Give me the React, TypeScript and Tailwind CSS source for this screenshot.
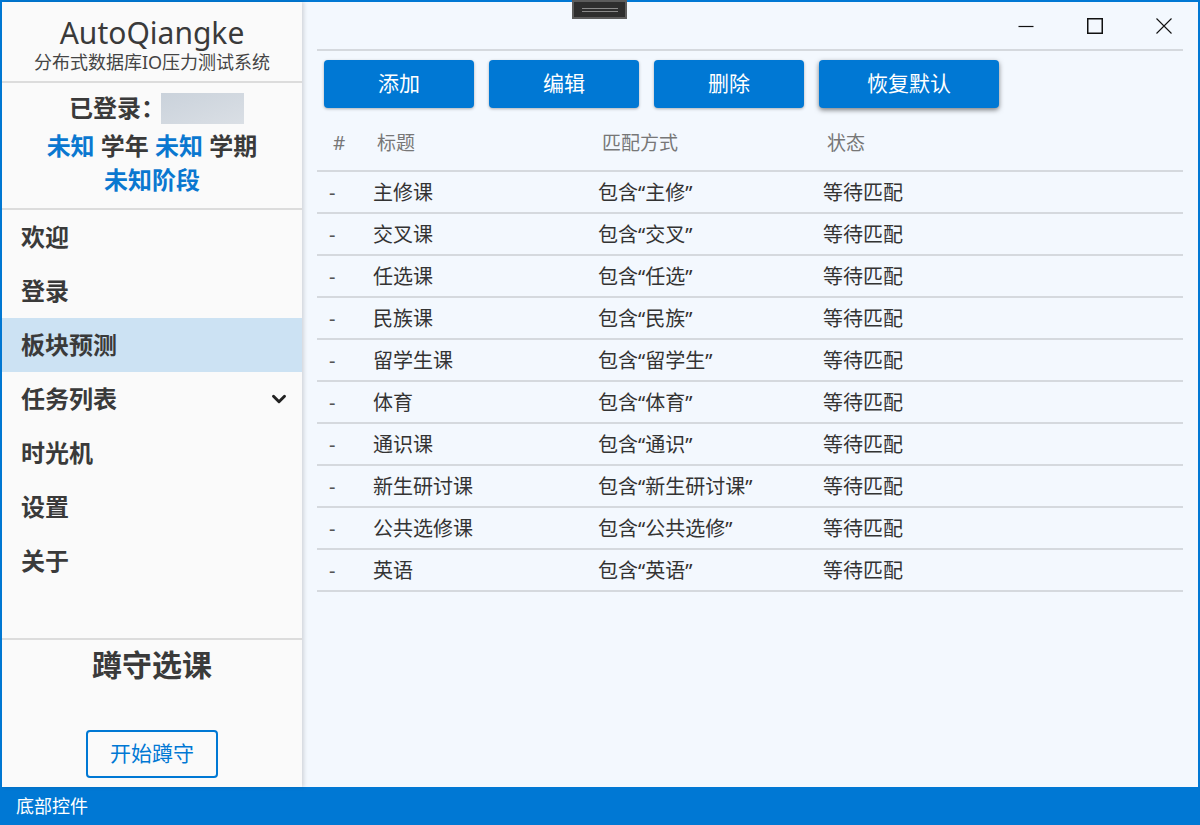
import { ChevronDown } from "lucide-react";

const rows = [
  { title: "主修课", match: "包含“主修”" },
  { title: "交叉课", match: "包含“交叉”" },
  { title: "任选课", match: "包含“任选”" },
  { title: "民族课", match: "包含“民族”" },
  { title: "留学生课", match: "包含“留学生”" },
  { title: "体育", match: "包含“体育”" },
  { title: "通识课", match: "包含“通识”" },
  { title: "新生研讨课", match: "包含“新生研讨课”" },
  { title: "公共选修课", match: "包含“公共选修”" },
  { title: "英语", match: "包含“英语”" },
];

const navItems = ["欢迎", "登录", "板块预测", "任务列表", "时光机", "设置", "关于"];

function Sidebar() {
  return (
    <aside className="relative z-10 flex w-[300px] shrink-0 flex-col bg-[#fafafa] text-[#333] shadow-[2px_0_4px_rgba(0,0,0,0.14)]">
      {/* Title */}
      <div className="flex flex-col items-center pb-[7px] pt-[14px]">
        <div className="h-[34px] text-[30px] leading-[34px] text-[#3a3a3a]">AutoQiangke</div>
        <div className="h-[24px] text-[18px] leading-[24px] text-[#444]">分布式数据库IO压力测试系统</div>
      </div>
      <div className="h-[2px] bg-[#dcdcdc]" />

      {/* Login info */}
      <div className="flex flex-col items-center pb-[12px] font-bold">
        <div className="mt-[9px] flex h-[32px] items-center pl-[9px]">
          <span className="text-[24px] leading-[32px] text-[#3a3a3a]">已登录：</span>
          <span className="ml-[-4px] h-[31px] w-[83px] bg-gradient-to-br from-[#cad2db] to-[#dadfe5]" />
        </div>
        <div className="mt-[5px] h-[34px] text-[24px] leading-[34px] text-[#3a3a3a]">
          <span className="text-[#0a78d0]">未知</span> 学年 <span className="text-[#0a78d0]">未知</span> 学期
        </div>
        <div className="h-[33px] text-[24px] leading-[33px] text-[#0a78d0]">未知阶段</div>
      </div>
      <div className="h-[2px] bg-[#dcdcdc]" />

      {/* Navigation */}
      <nav className="flex flex-col">
        {navItems.map((item) => (
          <div
            key={item}
            className={`flex h-[54px] items-center justify-between pl-[19px] pr-[12px] text-[24px] font-bold text-[#3a3a3a] ${
              item === "板块预测" ? "bg-[#cce2f3]" : ""
            }`}
          >
            <span>{item}</span>
            {item === "任务列表" && <ChevronDown size={22} strokeWidth={3.2} className="text-[#222]" />}
          </div>
        ))}
      </nav>

      <div className="flex-1" />
      <div className="h-[2px] bg-[#dcdcdc]" />

      {/* Watch section */}
      <div className="flex flex-col items-center pb-[9px] pt-[7px]">
        <div className="h-[36px] text-[30px] font-bold leading-[36px] text-[#3a3a3a]">蹲守选课</div>
        <button className="mt-[47px] flex h-[48px] w-[132px] items-center justify-center rounded-[4px] border-2 border-[#0078d4] text-[21px] text-[#0078d4]">
          开始蹲守
        </button>
      </div>
    </aside>
  );
}

function WindowControls() {
  return (
    <div className="flex h-[47px] justify-end">
      <div className="flex w-[69px] items-center justify-center">
        <svg width="16" height="16" viewBox="0 0 16 16">
          <line x1="0.5" y1="8.5" x2="15.5" y2="8.5" stroke="#111" strokeWidth="1.2" />
        </svg>
      </div>
      <div className="flex w-[69px] items-center justify-center">
        <svg width="16" height="16" viewBox="0 0 16 16">
          <rect x="0.75" y="0.75" width="14.5" height="14.5" fill="none" stroke="#111" strokeWidth="1.5" />
        </svg>
      </div>
      <div className="flex w-[69px] items-center justify-center">
        <svg width="16" height="16" viewBox="0 0 16 16">
          <path d="M0.5 0.5 L15.5 15.5 M15.5 0.5 L0.5 15.5" stroke="#111" strokeWidth="1.1" />
        </svg>
      </div>
    </div>
  );
}

function Main() {
  const buttons = ["添加", "编辑", "删除", "恢复默认"];
  return (
    <main className="flex flex-1 flex-col bg-[#f3f8fe]">
      <WindowControls />
      <div className="px-[15px]">
        <div className="h-[2px] bg-[#d5d9de]" />

        {/* Toolbar */}
        <div className="mt-[9px] flex gap-[15px] pl-[7px]">
          {buttons.map((b) => (
            <button
              key={b}
              className={`flex h-[48px] items-center justify-center rounded-[4px] bg-[#0078d4] text-[21px] text-white ${
                b === "恢复默认"
                  ? "w-[180px] shadow-[0_2px_5px_rgba(0,0,0,0.5)]"
                  : "w-[150px] shadow-[0_1px_3px_rgba(0,0,0,0.3)]"
              }`}
            >
              {b}
            </button>
          ))}
        </div>

        {/* Table */}
        <div className="mt-[20px] grid h-[44px] grid-cols-[44px_225px_225px_1fr] border-b-2 border-[#d5d9de] pb-[14px] pl-[16px] text-[19px] leading-[30px] text-[#777]">
          <span>#</span>
          <span>标题</span>
          <span>匹配方式</span>
          <span>状态</span>
        </div>
        {rows.map((r) => (
          <div
            key={r.title}
            className="grid h-[42px] grid-cols-[44px_225px_225px_1fr] items-center border-b-2 border-[#d5d9de] pl-[12px] pt-[2px] text-[20px] text-[#333]"
          >
            <span className="text-[#555]">-</span>
            <span>{r.title}</span>
            <span>{r.match}</span>
            <span>等待匹配</span>
          </div>
        ))}
      </div>
    </main>
  );
}

export default function App() {
  return (
    <div
      className="relative flex h-screen w-screen flex-col overflow-hidden"
      style={{ fontFamily: '"Noto Sans", "Noto Sans CJK SC", sans-serif' }}
    >
      <div className="flex min-h-0 flex-1 border-x-2 border-t-2 border-[#0078d4]">
        <Sidebar />
        <Main />
      </div>
      <div className="flex h-[38px] shrink-0 items-center bg-[#0078d4] pl-[16px] text-[18px] text-white">
        底部控件
      </div>

      {/* Drag handle overlay */}
      <div className="absolute left-[572px] top-0 flex h-[19px] w-[55px] flex-col items-center justify-center gap-[2px] border-2 border-[#5c5c5c] bg-[#2e2e2e]">
        <div className="h-px w-[36px] bg-[#8a8a8a]" />
        <div className="h-px w-[36px] bg-[#8a8a8a]" />
      </div>
    </div>
  );
}
